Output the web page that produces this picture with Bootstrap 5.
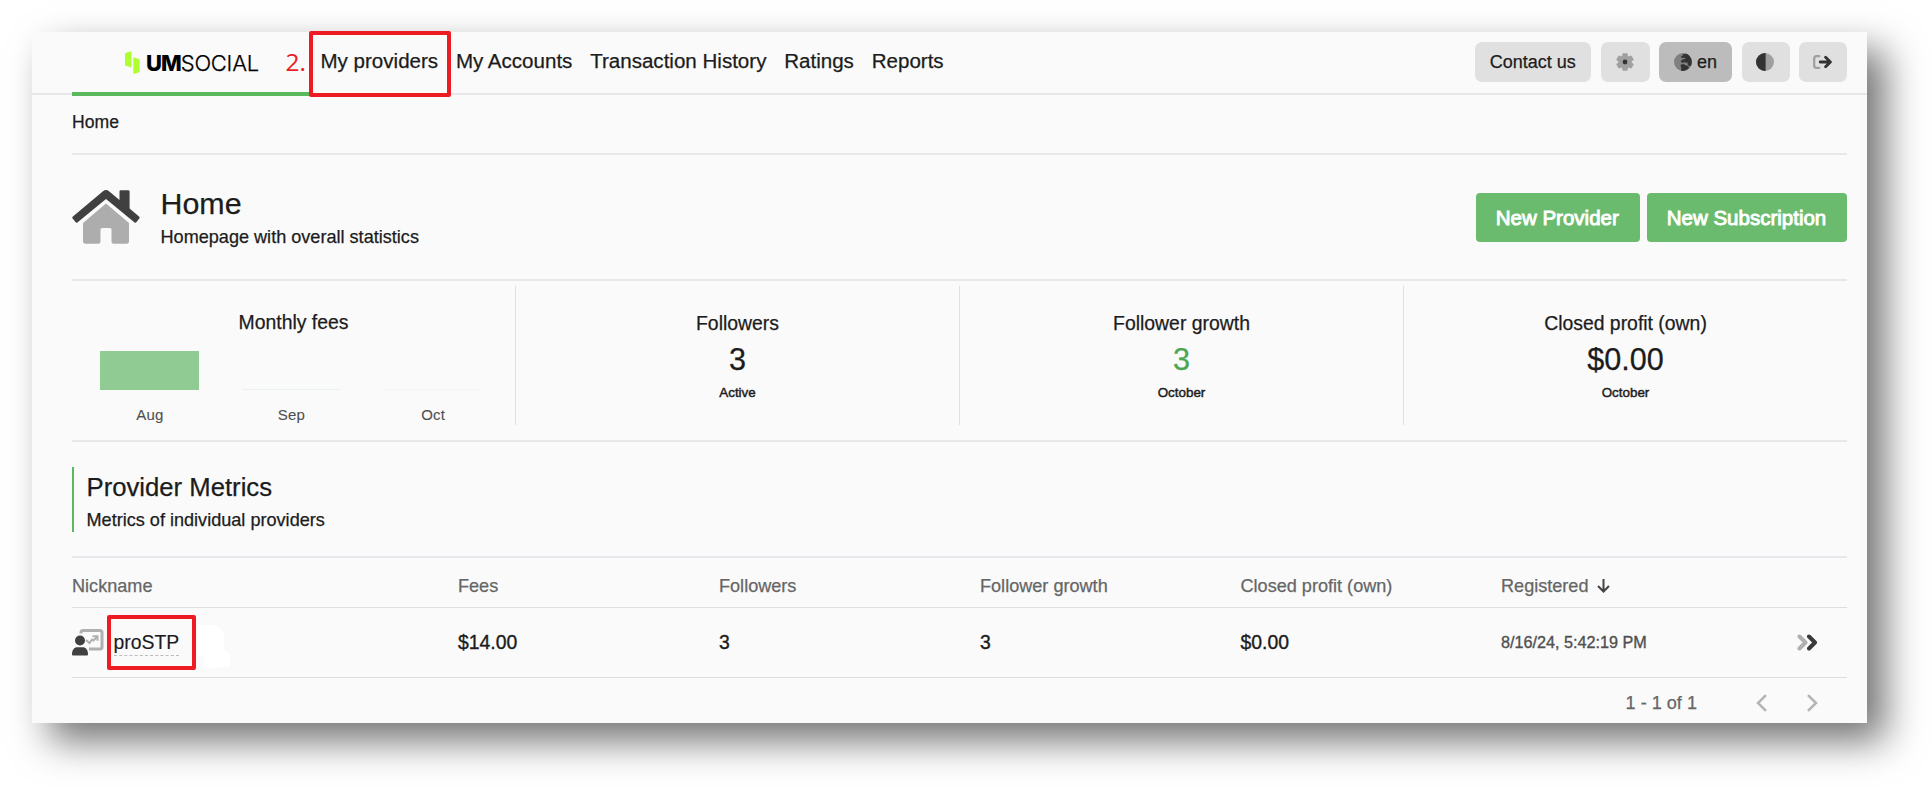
<!DOCTYPE html>
<html lang="en">
<head>
    <meta charset="UTF-8">
    <meta name="viewport" content="width=device-width, initial-scale=1.0">
    <title>UM Social - Home</title>
    <link href="https://cdn.jsdelivr.net/npm/bootstrap@5.3.0/dist/css/bootstrap.min.css" rel="stylesheet">
    <style>
        body {
            height: 788px;
            padding: 32px 0 0 32px;
            background-color: #fff;
            font-family: "Liberation Sans", Arial, sans-serif;
            font-size: 18.1px;
            color: #1c1c1c;
            -webkit-text-stroke-width: 0.25px;
            overflow: hidden;
        }

        .app-window {
            width: 1835px;
            height: 691px;
            background-color: #fafafa;
            box-shadow: 18px 18px 36px rgba(0, 0, 0, 0.55);
        }

        .app-header {
            height: 63px;
            padding: 0 20px 1px 40px;
            border-bottom: 2px solid #e7e7ea;
        }

        .brand {
            width: 238px;
            height: 60px;
            padding-left: 53px;
            -webkit-text-stroke-width: 0;
        }

        .brand::after {
            content: "";
            position: absolute;
            left: 0;
            right: 0;
            bottom: -4px;
            height: 4px;
            background-color: #5cb85f;
        }

        .brand-text {
            font-family: Inter, sans-serif;
            font-size: 22px;
            line-height: 26px;
            color: #000;
            margin: 2px 0 0 6px;
        }

        .brand-text b {
            font-weight: 800;
            letter-spacing: -1px;
        }

        .brand-text span {
            font-weight: 300;
            letter-spacing: -0.25px;
            -webkit-text-stroke-width: 0.25px;
        }

        .step-no {
            left: 213.5px;
            top: 13px;
            font-family: "Open Sans", sans-serif;
            font-size: 24.5px;
            line-height: 34px;
            color: #ed1c24;
        }

        .main-nav {
            gap: 17.8px;
            padding: 0 0 3px 10.5px;
        }

        .main-nav a {
            font-size: 20.55px;
            line-height: 24px;
            color: #1c1c1c;
            text-decoration: none;
            white-space: nowrap;
        }

        .red-frame {
            position: absolute;
            border: 4.5px solid #ed1c24;
            border-radius: 2px;
        }

        .frame-nav {
            left: -12px;
            top: -18px;
            width: 142px;
            height: 66px;
        }

        .frame-nick {
            left: -7px;
            top: -15px;
            width: 89px;
            height: 55px;
        }

        .tool-btn {
            height: 40px;
            padding: 0;
            border: 0;
            border-radius: 7px;
            background-color: #e0e0e0;
            font-size: 18px;
            line-height: 40px;
            color: #1c1c1c;
            width: 48px;
        }

        .page-body {
            padding: 0 20px 0 40px;
        }

        .crumbs {
            height: 60px;
            padding-bottom: 4px;
            font-size: 17.6px;
            border-bottom: 2px solid #e8e8ea;
        }

        .hero {
            height: 126px;
            border-bottom: 2px solid #e7e7eb;
        }

        .hero h1 {
            font-size: 30.4px;
            line-height: 36px;
            font-weight: 400;
            margin: 2px 0 0;
        }

        .hero p {
            line-height: 32px;
            margin: 0 0 -2px;
        }

        .btn-new {
            height: 49px;
            padding: 0 1px 0 0;
            border: 0;
            border-radius: 4px;
            background-color: #6abb6e;
            color: #fff;
            font-size: 20.5px;
            line-height: 47px;
            -webkit-text-stroke: 0.9px #fff;
        }

        .stats {
            height: 161px;
            padding-top: 5px;
            border-bottom: 2px solid #e8e8ea;
        }

        .stat-cell {
            flex: 1 1 0;
            height: 139px;
            padding-top: 22px;
            text-align: center;
        }

        .stat-cell + .stat-cell {
            border-left: 1.5px solid #e0e0e2;
        }

        .stat-label {
            font-size: 19.4px;
            line-height: 30px;
        }

        .stat-value {
            font-size: 30.6px;
            line-height: 42px;
        }

        .stat-note {
            font-size: 13.4px;
            line-height: 26px;
            -webkit-text-stroke-width: 0.45px;
        }

        .bars {
            width: 425px;
            margin-left: 7px;
        }

        .bar-slot {
            height: 53px;
        }

        .bar-fill {
            width: 99px;
            background-color: #8fcb92;
        }

        .bar-name {
            margin-top: 15px;
            font-size: 15px;
            line-height: 20px;
            letter-spacing: 0.2px;
            color: #505050;
            -webkit-text-stroke-width: 0.1px;
        }

        .metrics-head {
            margin: 25px 0 24.5px;
            height: 64.5px;
            padding: 3px 0 0 12.5px;
            border-left: 2.5px solid #5cb85f;
        }

        .metrics-head h2 {
            font-size: 25.7px;
            line-height: 34px;
            font-weight: 400;
            margin: 0;
        }

        .metrics-head p {
            line-height: 32px;
            margin: 0;
        }

        .metrics-table {
            table-layout: fixed;
            border-top: 2px solid #e6e8ed;
        }

        .metrics-table th {
            height: 50px;
            padding: 8px 0 0;
            font-weight: 400;
            color: #666;
            border-bottom: 1.5px solid #dedede;
        }

        .metrics-table td {
            height: 70px;
            padding: 1px 0 0;
            font-size: 19.4px;
            border-bottom: 1.5px solid #dedede;
            -webkit-text-stroke-width: 0.35px;
        }

        .metrics-table td.reg-date {
            font-size: 16.2px;
            color: #505050;
        }

        .nick {
            line-height: 25px;
            border-bottom: 1.5px dashed #bbb;
            -webkit-text-stroke-width: 0.15px;
        }

        .eraser {
            position: absolute;
            left: 84px;
            top: -5px;
        }

        .pager {
            height: 45px;
            padding: 6px 29px 0 0;
            line-height: 38px;
            color: #666;
        }
    </style>
</head>
<body>
    <div class="app-window">
        <!-- Header -->
        <header class="app-header d-flex align-items-center">
            <div class="brand position-relative d-flex align-items-center">
                <svg width="15" height="23" viewBox="0 0 15 23" fill="#adff2f">
                    <path d="M0 2.2 6.4 0v16.6L0 14.6z"/>
                    <path d="M8.300 6.200l6.200 2v13L8.300 23z"/>
                </svg>
                <div class="brand-text"><b>UM</b><span>SOCIAL</span></div>
                <span class="step-no position-absolute">2.</span>
            </div>
            <nav class="main-nav d-flex">
                <a href="#" class="position-relative">My providers<span class="red-frame frame-nav"></span></a>
                <a href="#">My Accounts</a>
                <a href="#">Transaction History</a>
                <a href="#">Ratings</a>
                <a href="#">Reports</a>
            </nav>
            <div class="d-flex ms-auto" style="gap: 9.5px">
                <button class="btn tool-btn" style="width: 116.5px">Contact us</button>
                <button class="btn tool-btn d-flex align-items-center justify-content-center" style="width: 49px">
                    <svg width="18" height="18" viewBox="0 0 18 18">
                        <g fill="#a0a0a0">
                            <circle cx="9" cy="9" r="6.8"/>
                            <rect x="6.2" y="0.2" width="5.6" height="17.6" rx="1.2"/>
                            <rect x="6.2" y="0.2" width="5.6" height="17.6" rx="1.2" transform="rotate(60 9 9)"/>
                            <rect x="6.2" y="0.2" width="5.6" height="17.6" rx="1.2" transform="rotate(120 9 9)"/>
                        </g>
                        <circle cx="9" cy="9" r="2.4" fill="#333"/>
                    </svg>
                </button>
                <button class="btn tool-btn d-flex align-items-center justify-content-center" style="width: 73px; background-color: #bcbcbc">
                    <svg width="18" height="18" viewBox="0 0 18 18" style="margin-right: 5px">
                        <circle cx="9" cy="9" r="9" fill="#808080"/>
                        <path d="M9.500 1l3-.3c3 1.300 5.300 4.500 5.300 8.300 0 1.800-.5 3.300-1.400 4.600l-2.200-1.400-.8-2.400-2.800-.6-2.400.6-1.600-1.300 1.800-2 3-.4-.3-1.300-3 .3-1.300-1 1.800-1.600z" fill="#333"/>
                        <path d="M6.500 11.800l3-.8 2 1.300 2.500.5 1 2.300c-2 2.300-5 3.300-8 2.600l.3-2.200z" fill="#333"/>
                    </svg>
                    en
                </button>
                <button class="btn tool-btn d-flex align-items-center justify-content-center" style="padding-right: 2px">
                    <svg width="18" height="18" viewBox="0 0 18 18">
                        <circle cx="9" cy="9" r="9" fill="#a0a0a0"/>
                        <path d="M9.600 0H9a9 9 0 0 0 0 18h.6z" fill="#333"/>
                    </svg>
                </button>
                <button class="btn tool-btn d-flex align-items-center justify-content-center" style="padding-right: 2px">
                    <svg width="19" height="14" viewBox="0 0 19 14" fill="none" stroke-linecap="round" stroke-linejoin="round">
                        <path d="M6.300 1.200H3.200a2 2 0 0 0-2 2v7.600a2 2 0 0 0 2 2h3.100" stroke="#a0a0a0" stroke-width="2.300"/>
                        <path d="M7.200 7h9.500M12.600 2.200L17.400 7l-4.800 4.800" stroke="#333" stroke-width="2.800"/>
                    </svg>
                </button>
            </div>
        </header>

        <main class="page-body">
            <div class="crumbs d-flex align-items-center">Home</div>

            <!-- Page title -->
            <section class="hero d-flex align-items-center">
                <svg width="68" height="54" viewBox="0 0 68 54">
                    <path d="M34 13.500 57 33v18.500a2.300 2.300 0 0 1-2.300 2.300H41.500A2 2 0 0 1 39.500 52V39.500a1.500 1.500 0 0 0-1.500-1.500h-8a1.500 1.500 0 0 0-1.500 1.500V52a2 2 0 0 1-2 1.800H13.300A2.300 2.300 0 0 1 11 51.500V33z" fill="#adadad"/>
                    <path d="M31 1.200a4.800 4.800 0 0 1 6 0L47.500 10V1.500A1.300 1.300 0 0 1 48.800.2h7.500a1.300 1.300 0 0 1 1.300 1.300v17L67 26.500a1.500 1.500 0 0 1 .3 2L64.500 32a1.500 1.500 0 0 1-2.200.2L34 9 5.700 32.200A1.500 1.500 0 0 1 3.500 32L.6 28.500a1.500 1.500 0 0 1 .3-2z" fill="#404040"/>
                </svg>
                <div style="margin-left: 20.5px">
                    <h1>Home</h1>
                    <p>Homepage with overall statistics</p>
                </div>
                <div class="d-flex ms-auto" style="gap: 7.5px">
                    <button class="btn btn-new" style="width: 163.5px">New Provider</button>
                    <button class="btn btn-new" style="width: 200px">New Subscription</button>
                </div>
            </section>

            <!-- Statistics -->
            <section class="stats d-flex">
                <div class="stat-cell" style="padding-top: 21px">
                    <div class="stat-label">Monthly fees</div>
                    <div class="bars d-flex">
                        <div class="flex-fill w-100">
                            <div class="bar-slot d-flex align-items-end justify-content-center"><div class="bar-fill" style="height: 39px"></div></div>
                            <div class="bar-name">Aug</div>
                        </div>
                        <div class="flex-fill w-100">
                            <div class="bar-slot d-flex align-items-end justify-content-center"><div class="bar-fill" style="height: 1px; opacity: .15"></div></div>
                            <div class="bar-name">Sep</div>
                        </div>
                        <div class="flex-fill w-100">
                            <div class="bar-slot d-flex align-items-end justify-content-center"><div class="bar-fill" style="height: 1px; opacity: .06"></div></div>
                            <div class="bar-name">Oct</div>
                        </div>
                    </div>
                </div>
                <div class="stat-cell">
                    <div class="stat-label">Followers</div>
                    <div class="stat-value">3</div>
                    <div class="stat-note">Active</div>
                </div>
                <div class="stat-cell">
                    <div class="stat-label">Follower growth</div>
                    <div class="stat-value" style="color: #4ca650">3</div>
                    <div class="stat-note">October</div>
                </div>
                <div class="stat-cell">
                    <div class="stat-label">Closed profit (own)</div>
                    <div class="stat-value">$0.00</div>
                    <div class="stat-note">October</div>
                </div>
            </section>

            <!-- Provider metrics -->
            <section class="metrics-head">
                <h2>Provider Metrics</h2>
                <p>Metrics of individual providers</p>
            </section>
            <table class="metrics-table w-100">
                <colgroup>
                    <col style="width: 386px">
                    <col style="width: 261px">
                    <col style="width: 261px">
                    <col style="width: 260.5px">
                    <col style="width: 260.5px">
                    <col>
                </colgroup>
                <thead>
                    <tr>
                        <th>Nickname</th>
                        <th>Fees</th>
                        <th>Followers</th>
                        <th>Follower growth</th>
                        <th>Closed profit (own)</th>
                        <th>Registered
                            <svg width="13" height="14" viewBox="0 0 13 14" fill="none" stroke="#444" stroke-width="2" style="margin-left: 3px; vertical-align: -1px">
                                <path d="M6.500 0v12.500M1 7l5.500 5.500L12 7"/>
                            </svg>
                        </th>
                    </tr>
                </thead>
                <tbody>
                    <tr>
                        <td>
                            <div class="d-flex align-items-center">
                                <svg width="32" height="27" viewBox="0 0 32 27">
                                    <path d="M9 4.500V3.500A2 2 0 0 1 11 1.500h17a2 2 0 0 1 2 2v14.500a2 2 0 0 1-2 2H17" fill="none" stroke="#b0b0b0" stroke-width="3"/>
                                    <path d="M14 11l3.500 3 2.500-3.500 1.500 1L25 8M20.500 7.300h5v4.500" fill="none" stroke="#b0b0b0" stroke-width="2"/>
                                    <circle cx="8" cy="11.500" r="5" fill="#404040"/>
                                    <path d="M0 25.500C0 21 2 18.300 5.500 18.300h5C14 18.300 16 21 16 25.500a1 1 0 0 1-1 1H1a1 1 0 0 1-1-1z" fill="#404040"/>
                                </svg>
                                <div class="position-relative" style="margin-left: 9.5px">
                                    <div class="nick">proSTP</div>
                                    <svg class="eraser" width="33" height="43" viewBox="0 0 33 43" fill="#fff">
                                        <path d="M0 0h18l8 7v17l6 4v14H21l-1 1H6V32l-6-2z"/>
                                    </svg>
                                    <span class="red-frame frame-nick"></span>
                                </div>
                            </div>
                        </td>
                        <td>$14.00</td>
                        <td>3</td>
                        <td>3</td>
                        <td>$0.00</td>
                        <td class="reg-date">
                            <div class="d-flex align-items-center">
                                8/16/24, 5:42:19 PM
                                <svg width="21" height="17" viewBox="0 0 21 17" fill="none" stroke-width="4" stroke-linecap="round" stroke-linejoin="round" class="ms-auto" style="margin-right: 29px">
                                    <path d="M2.500 2.500l6 6-6 6" stroke="#b0b0b0"/>
                                    <path d="M12 2.500l6 6-6 6" stroke="#3a3a3a"/>
                                </svg>
                            </div>
                        </td>
                    </tr>
                </tbody>
            </table>

            <div class="pager d-flex align-items-center justify-content-end">
                <span>1 - 1 of 1</span>
                <svg width="11" height="18" viewBox="0 0 11 18" fill="none" stroke="#b4b4b4" stroke-width="2.500" style="margin-left: 59px">
                    <path d="M10 1.200L2 9l8 7.800"/>
                </svg>
                <svg width="11" height="18" viewBox="0 0 11 18" fill="none" stroke="#b4b4b4" stroke-width="2.500" style="margin-left: 40px">
                    <path d="M1 1.200L9 9l-8 7.800"/>
                </svg>
            </div>
        </main>
    </div>
    <script src="https://cdn.jsdelivr.net/npm/bootstrap@5.3.0/dist/js/bootstrap.bundle.min.js"></script>
</body>
</html>
